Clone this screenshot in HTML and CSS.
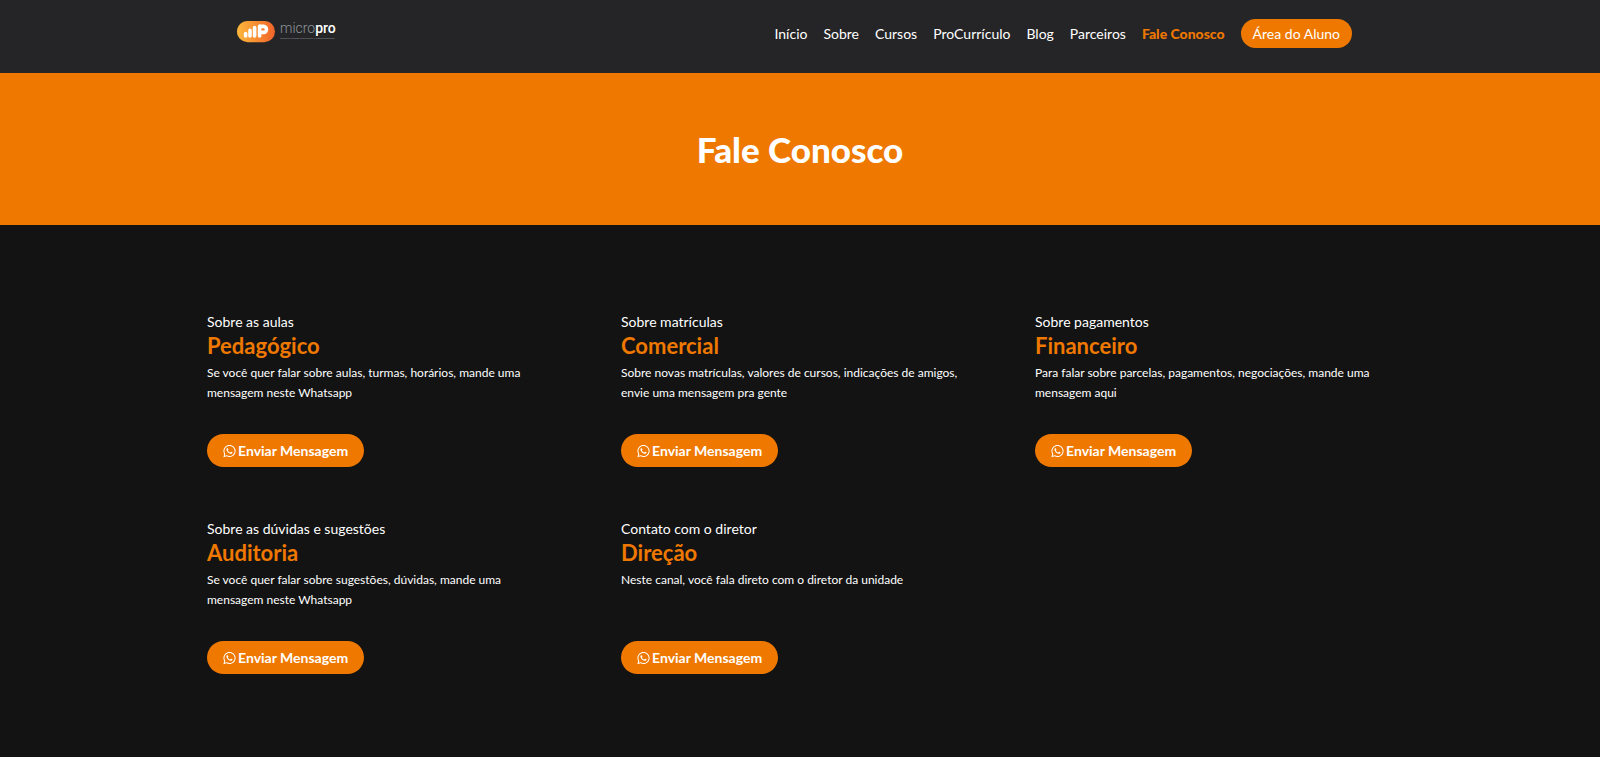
FILE: index.html
```
<!DOCTYPE html>
<html lang="pt-BR">
<head>
    <meta charset="UTF-8">
    <meta name="viewport" content="width=device-width, initial-scale=1.0">
    <title>Fale Conosco | Micropro</title>
    <link rel="stylesheet" href="styles.css">
</head>
<body>
    <!-- WhatsApp icon used by the buttons -->
    <svg class="sprite" aria-hidden="true">
        <symbol id="whatsapp" viewBox="0 0 448 512">
            <path d="M380.9 97.1C339 55.1 283.2 32 223.9 32c-122.4 0-222 99.6-222 222 0 39.1 10.2 77.3 29.6 111L0 480l117.7-30.9c32.4 17.7 68.9 27 106.1 27h.1c122.3 0 224.1-99.6 224.1-222 0-59.3-25.2-115-67.1-157zm-157 341.6c-33.2 0-65.7-8.9-94-25.7l-6.700-4-69.800 18.300L72 359.200l-4.400-7c-18.500-29.400-28.200-63.300-28.200-98.200 0-101.700 82.800-184.500 184.600-184.500 49.300 0 95.600 19.200 130.400 54.100 34.800 34.900 56.200 81.200 56.100 130.500 0 101.800-84.900 184.600-186.600 184.600zm101.200-138.200c-5.500-2.800-32.800-16.200-37.900-18-5.100-1.900-8.800-2.800-12.500 2.800-3.700 5.600-14.300 18-17.600 21.800-3.200 3.700-6.500 4.200-12 1.400-32.600-16.300-54-29.100-75.500-66-5.700-9.800 5.700-9.100 16.300-30.300 1.800-3.700.9-6.900-.5-9.700-1.400-2.800-12.500-30.100-17.100-41.200-4.500-10.800-9.100-9.300-12.500-9.500-3.200-.2-6.900-.2-10.600-.2-3.700 0-9.700 1.400-14.800 6.900-5.100 5.600-19.400 19-19.400 46.300 0 27.300 19.900 53.700 22.600 57.400 2.800 3.700 39.100 59.700 94.800 83.800 35.200 15.200 49 16.500 66.600 13.900 10.700-1.600 32.800-13.400 37.400-26.400 4.600-13 4.600-24.100 3.200-26.400-1.300-2.500-5-3.900-10.500-6.600z"/>
        </symbol>
    </svg>

    <header class="header">
        <div class="container header-content">
            <a href="#" class="logo" aria-label="Micropro">
                <svg class="logo-img" viewBox="0 0 1000 220" aria-hidden="true">
                    <defs>
                        <linearGradient id="logo-gradient" x1="0" y1="0" x2="1" y2="0">
                            <stop offset="0" stop-color="#fdb83c"/>
                            <stop offset="1" stop-color="#f0642a"/>
                        </linearGradient>
                    </defs>
                    <rect width="380" height="212" rx="106" fill="url(#logo-gradient)"/>
                    <g fill="none" stroke="#fff" stroke-width="36" stroke-linecap="round" stroke-linejoin="round">
                        <path d="M86 150v-24M130 150V94M176 150V66M226 150V54"/>
                        <path d="M226 54h42a26 30 0 0 1 0 60h-36"/>
                    </g>
                    <text x="430" y="120" class="logo-name">micro<tspan class="logo-bold">pro</tspan></text>
                    <text x="432" y="184" class="logo-slogan">desenvolvimento profissional e comportamental</text>
                </svg>
            </a>
            <nav class="menu">
                <a href="#">Início</a>
                <a href="#">Sobre</a>
                <a href="#">Cursos</a>
                <a href="#">ProCurrículo</a>
                <a href="#">Blog</a>
                <a href="#">Parceiros</a>
                <a href="#" class="active">Fale Conosco</a>
                <a href="#" class="btn-aluno">Área do Aluno</a>
            </nav>
        </div>
    </header>

    <section class="banner">
        <h1>Fale Conosco</h1>
    </section>

    <main class="container contatos">
        <div class="contato">
            <span>Sobre as aulas</span>
            <h2>Pedagógico</h2>
            <p>Se você quer falar sobre aulas, turmas, horários, mande uma mensagem neste Whatsapp</p>
            <a href="#" class="btn"><svg class="icon" aria-hidden="true"><use href="#whatsapp"/></svg>Enviar Mensagem</a>
        </div>
        <div class="contato">
            <span>Sobre matrículas</span>
            <h2>Comercial</h2>
            <p>Sobre novas matrículas, valores de cursos, indicações de amigos, envie uma mensagem pra gente</p>
            <a href="#" class="btn"><svg class="icon" aria-hidden="true"><use href="#whatsapp"/></svg>Enviar Mensagem</a>
        </div>
        <div class="contato">
            <span>Sobre pagamentos</span>
            <h2>Financeiro</h2>
            <p>Para falar sobre parcelas, pagamentos, negociações, mande uma mensagem aqui</p>
            <a href="#" class="btn"><svg class="icon" aria-hidden="true"><use href="#whatsapp"/></svg>Enviar Mensagem</a>
        </div>
        <div class="contato">
            <span>Sobre as dúvidas e sugestões</span>
            <h2>Auditoria</h2>
            <p>Se você quer falar sobre sugestões, dúvidas, mande uma mensagem neste Whatsapp</p>
            <a href="#" class="btn"><svg class="icon" aria-hidden="true"><use href="#whatsapp"/></svg>Enviar Mensagem</a>
        </div>
        <div class="contato">
            <span>Contato com o diretor</span>
            <h2>Direção</h2>
            <p>Neste canal, você fala direto com o diretor da unidade</p>
            <a href="#" class="btn"><svg class="icon" aria-hidden="true"><use href="#whatsapp"/></svg>Enviar Mensagem</a>
        </div>
    </main>
</body>
</html>
```
FILE: styles.css
```
* {
    margin: 0;
    padding: 0;
    box-sizing: border-box;
}

body {
    font-family: 'Lato', sans-serif;
    background-color: #131313;
    color: #fff;
}

a {
    color: #fff;
    text-decoration: none;
}

.sprite {
    display: none;
}

.container {
    max-width: 1186px;
    margin: 0 auto;
}

/* Header */
.header {
    background-color: #252527;
    padding: 19px 0 25px;
}

.header-content {
    display: flex;
    justify-content: space-between;
    align-items: flex-start;
    padding: 0 41px 0 30px;
}

.logo {
    padding-top: 2px;
}

.logo-img {
    display: block;
    width: 100px;
    height: 22px;
}

.logo-name {
    font-family: 'Roboto', sans-serif;
    font-size: 140px;
    font-weight: 300;
    fill: #8b9499;
}

.logo-bold {
    font-weight: 500;
    fill: #fff;
}

.logo-slogan {
    font-size: 26px;
    fill: #8b9499;
}

.menu {
    display: flex;
    align-items: center;
    gap: 16px;
    font-size: 14px;
    line-height: 21px;
}

.menu .active {
    color: #ef7800;
    font-weight: 900;
}

.menu .btn-aluno {
    background-color: #ef7800;
    padding: 4px 12px;
    border-radius: 15px;
}

/* Banner */
.banner {
    background-color: #ef7800;
    padding: 52px 20px;
    text-align: center;
}

.banner h1 {
    font-size: 35px;
    font-weight: 900;
    line-height: 48px;
}

/* Contacts */
.contatos {
    display: grid;
    grid-template-columns: repeat(3, 1fr);
    gap: 52px 56px;
    padding: 87px 0 80px;
}

.contato {
    display: flex;
    flex-direction: column;
    align-items: flex-start;
}

.contato span {
    font-size: 14px;
    line-height: 20px;
}

.contato h2 {
    color: #ef7800;
    font-size: 22px;
    font-weight: 700;
    line-height: 28px;
}

.contato p {
    font-size: 12px;
    line-height: 20px;
    min-height: 40px;
    padding-right: 8px;
    margin: 3px 0 31px;
}

.btn {
    display: flex;
    align-items: center;
    gap: 2px;
    background-color: #ef7800;
    padding: 6px 16px;
    border-radius: 17px;
    font-size: 14px;
    font-weight: 700;
    line-height: 21px;
}

.icon {
    width: 13px;
    height: 14px;
    fill: #fff;
}

@media (max-width: 900px) {
    .header-content {
        flex-direction: column;
        align-items: center;
        gap: 20px;
    }

    .menu {
        flex-wrap: wrap;
        justify-content: center;
    }

    .contatos {
        grid-template-columns: 1fr;
        padding: 50px 20px;
    }
}
```
